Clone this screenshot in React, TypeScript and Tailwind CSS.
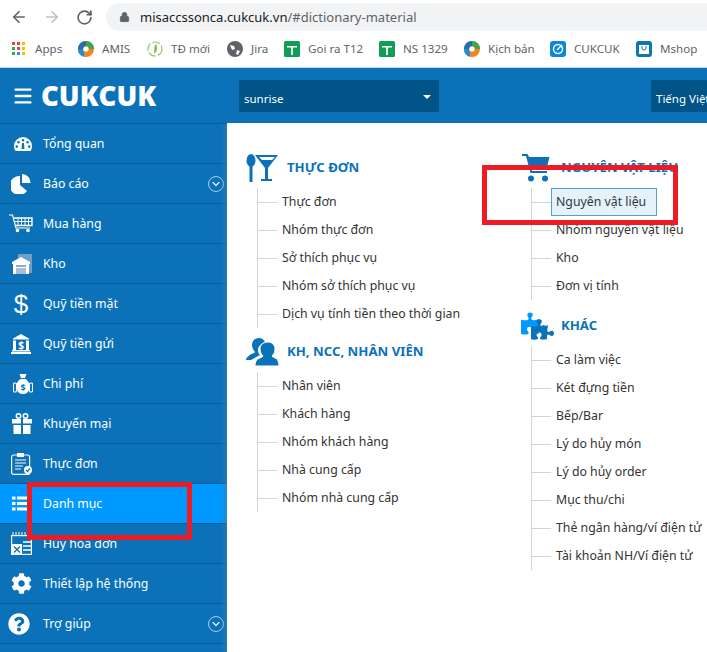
import { ArrowLeft, ArrowRight, RotateCw, Lock, Menu, ChevronDown } from "lucide-react";
import { FaCog, FaQuestionCircle, FaPuzzlePiece } from "react-icons/fa";
import type { ReactNode } from "react";

const font = "font-['Noto_Sans','Liberation_Sans',sans-serif]";

function Swirl() {
  return (
    <svg viewBox="0 0 16 16" className="w-4 h-4">
      <circle cx="8" cy="8" r="8" fill="#f58220" />
      <path d="M8 0a8 8 0 0 0-8 8h5a3 3 0 0 1 3-3z" fill="#1f6fb5" />
      <path d="M8 0a8 8 0 0 1 8 8h-5a3 3 0 0 0-3-3z" fill="#3aa655" />
      <path d="M0 8a8 8 0 0 0 6 7.7V11A3 3 0 0 1 5 8z" fill="#1c8fd6" />
      <circle cx="8" cy="8" r="2.6" fill="#fff" />
    </svg>
  );
}

function GreenCross() {
  return (
    <svg viewBox="0 0 16 16" className="w-4 h-4">
      <rect width="16" height="16" rx="1.5" fill="#0f9d58" />
      <path d="M3 5h10v1.6H8.9V14H7.1V6.6H3z" fill="#fff" />
    </svg>
  );
}

function Bookmark({ icon, label, className }: { icon: ReactNode; label: string; className: string }) {
  return (
    <div className={`flex items-center shrink-0 ${className}`}>
      {icon}
      <span className="ml-2 text-[11.6px] text-[#5f6368] whitespace-nowrap">{label}</span>
    </div>
  );
}

function AppsGrid() {
  const colors = ["#ea4335", "#ea4335", "#fbbc04", "#34a853", "#ea4335", "#fbbc04", "#34a853", "#4285f4", "#fbbc04"];
  return (
    <div className="grid grid-cols-3 gap-[2px] w-[13px]">
      {colors.map((c, i) => (
        <span key={i} className="w-[3px] h-[3px]" style={{ background: c }} />
      ))}
    </div>
  );
}

function Gauge() {
  return (
    <svg viewBox="0 0 18 14" className="w-[18px] h-[14px] ml-[6px] mt-[1px]">
      <path
        fillRule="evenodd"
        fill="#fff"
        d="M9 0a9 9 0 0 1 9 9c0 2-.5 3.500-1.500 5H1.500C.5 12.500 0 11 0 9a9 9 0 0 1 9-9zM9 2a1.300 1.300 0 1 0 0 2.600A1.300 1.300 0 0 0 9 2zM4.500 4a1.300 1.300 0 1 0 0 2.600 1.300 1.300 0 0 0 0-2.600zM13.500 4a1.300 1.300 0 1 0 0 2.600 1.300 1.300 0 0 0 0-2.600zM2.800 8.300a1.300 1.300 0 1 0 0 2.600 1.300 1.300 0 0 0 0-2.600zM15.200 8.300a1.300 1.300 0 1 0 0 2.600 1.300 1.300 0 0 0 0-2.600zM8 6l-.5 6h3L10 6z"
      />
    </svg>
  );
}

function Pie() {
  return (
    <svg viewBox="0 0 20 20" className="w-[20px] h-[20px] ml-[1px]">
      <path d="M9 2v9l7 6a9.500 9.500 0 1 1-7-15z" fill="#fff" />
      <path d="M11 0a8.500 8.500 0 0 1 8.500 9H11z" fill="#fff" />
    </svg>
  );
}

function CartOutline() {
  return (
    <svg viewBox="0 0 24 19" className="w-[24px] h-[19px] ml-[1px]" fill="none" stroke="#fff">
      <path d="M0 1h3.500l3.500 13h14" strokeWidth="1.200" />
      <path d="M5 4h18v7.500H7" strokeWidth="1.400" />
      <path d="M9 4v7.500M12.500 4v7.500M16 4v7.500M19.500 4v7.500M6 7.500h17" strokeWidth="1" />
      <circle cx="8.500" cy="16.500" r="1.800" fill="#fff" stroke="none" />
      <circle cx="19" cy="16.500" r="1.800" fill="#fff" stroke="none" />
    </svg>
  );
}

function Warehouse() {
  return (
    <svg viewBox="0 0 20 20" className="w-[20px] h-[20px] ml-[3px]">
      <path d="M6 0h14v19H6z" fill="#6f9fc9" />
      <path d="M0 8l9-5 9 5v2H0z" fill="#fff" />
      <path d="M1 10h16v10H1z" fill="#fff" />
      <path d="M4 11h10v2H4z" fill="#8aa9c2" />
      <path d="M4 14h10v6H4z" fill="#a8bfd2" />
    </svg>
  );
}

function Bank() {
  return (
    <svg viewBox="0 0 20 20" className="w-[20px] h-[20px] ml-[1px]" fill="#fff">
      <path d="M10 0l8 4.500v1H2v-1z" />
      <rect x="2" y="6.500" width="3" height="9.500" />
      <rect x="15" y="6.500" width="3" height="9.500" />
      <rect x="1" y="16" width="18" height="1.500" />
      <rect x="0" y="18" width="20" height="2" />
      <text x="10" y="14.500" fontSize="10" fontWeight="700" textAnchor="middle" fill="#fff">$</text>
    </svg>
  );
}

function MoneyBag() {
  return (
    <svg viewBox="0 0 20 20" className="w-[20px] h-[20px] ml-[6px]">
      <path d="M6.500 0h7l-1.500 4h-4z" fill="#fff" />
      <path d="M7.500 5h5c3 2 5 6 4 10-1 3-3 5-6.500 5s-5.500-2-6.500-5c-1-4 1-8 4-10z" fill="#fff" />
      <rect x="0.500" y="9" width="3" height="9" rx="1" fill="none" stroke="#fff" strokeWidth="1.100" />
      <rect x="16.500" y="9" width="3" height="9" rx="1" fill="none" stroke="#fff" strokeWidth="1.100" />
      <text x="10" y="17" fontSize="9" fontWeight="700" textAnchor="middle" fill="#0b72b9">$</text>
    </svg>
  );
}

function Gift() {
  return (
    <svg viewBox="0 0 20 21" className="w-[20px] h-[21px] ml-[4px]" fill="#fff">
      <circle cx="6.500" cy="3" r="2.200" fill="none" stroke="#fff" strokeWidth="1.500" />
      <circle cx="13.500" cy="3" r="2.200" fill="none" stroke="#fff" strokeWidth="1.500" />
      <rect x="0" y="6" width="9" height="4.500" />
      <rect x="11" y="6" width="9" height="4.500" />
      <rect x="1.500" y="12" width="7.500" height="9" />
      <rect x="11" y="12" width="7.500" height="9" />
    </svg>
  );
}

function Clipboard() {
  return (
    <svg viewBox="0 0 21 23" className="w-[21px] h-[23px] ml-[3px]">
      <rect x="0.600" y="3" width="18" height="19.400" rx="2" fill="none" stroke="#fff" strokeWidth="1.200" />
      <rect x="6" y="1" width="7" height="4" fill="#fff" />
      <path d="M4 8h11M4 11h11M4 14h8M4 17h6" stroke="#a9cbe4" strokeWidth="1.300" />
      <circle cx="17" cy="18" r="4" fill="#fff" />
      <path d="M15 18l1.500 1.500 2.500-3" stroke="#0b72b9" strokeWidth="1.200" fill="none" />
    </svg>
  );
}

function ListIcon() {
  return (
    <svg viewBox="0 0 16 15" className="w-[16px] h-[15px]" fill="#fff">
      <rect x="0" y="0.500" width="3.500" height="3" />
      <rect x="5" y="0.500" width="11" height="3" />
      <rect x="0" y="6" width="3.500" height="3" />
      <rect x="5" y="6" width="11" height="3" />
      <rect x="0" y="11.500" width="3.500" height="3" />
      <rect x="5" y="11.500" width="11" height="3" />
    </svg>
  );
}

function CancelBill() {
  return (
    <svg viewBox="0 0 21 23" className="w-[21px] h-[23px] ml-[3px]">
      <path d="M2 0v4M5 0v4M8 0v4M11 0v4M14 0v4M17 0v4" stroke="#fff" strokeWidth="1" />
      <rect x="0.600" y="3.600" width="19.800" height="18.800" fill="none" stroke="#fff" strokeWidth="1.200" />
      <path d="M12 10h8M12 14h8M12 18h8" stroke="#fff" strokeWidth="1.400" />
      <rect x="1" y="12" width="10" height="10" fill="#fff" />
      <path d="M3 14.500l6 6M9 14.500l-6 6" stroke="#0b72b9" strokeWidth="1.400" />
    </svg>
  );
}

function CircleDown() {
  return (
    <span className="w-[16px] h-[16px] rounded-full border-[1.5px] border-[#a9cde6] flex items-center justify-center">
      <ChevronDown className="w-[12px] h-[12px] text-[#cfe3f2]" strokeWidth={3} />
    </span>
  );
}

const menu: { label: string; icon: ReactNode; arrow?: boolean; active?: boolean }[] = [
  { label: "Tổng quan", icon: <Gauge /> },
  { label: "Báo cáo", icon: <Pie />, arrow: true },
  { label: "Mua hàng", icon: <CartOutline /> },
  { label: "Kho", icon: <Warehouse /> },
  { label: "Quỹ tiền mặt", icon: <span className="ml-[2px] text-[26px] leading-none text-white font-['Liberation_Sans',sans-serif]">$</span> },
  { label: "Quỹ tiền gửi", icon: <Bank /> },
  { label: "Chi phí", icon: <MoneyBag /> },
  { label: "Khuyến mại", icon: <Gift /> },
  { label: "Thực đơn", icon: <Clipboard /> },
  { label: "Danh mục", icon: <ListIcon />, active: true },
  { label: "Hủy hóa đơn", icon: <CancelBill /> },
  { label: "Thiết lập hệ thống", icon: <FaCog className="w-[21px] h-[21px] ml-[3px] text-white" /> },
  { label: "Trợ giúp", icon: <FaQuestionCircle className="w-[22px] h-[22px] mr-[2px] text-white" />, arrow: true },
];

function SideItem({ label, icon, arrow, active }: { label: string; icon: ReactNode; arrow?: boolean; active?: boolean }) {
  return (
    <div className={`h-[40px] flex items-center border-b border-[#075a92] shrink-0 ${active ? "bg-[#0099ff]" : ""}`}>
      <div className="w-[38px] ml-[1px] flex justify-center shrink-0">{icon}</div>
      <span className="ml-[4px] pt-[2px] text-[12.3px] text-white flex-1 whitespace-nowrap">{label}</span>
      {arrow && <span className="mr-[3px]"><CircleDown /></span>}
    </div>
  );
}

function Group({ icon, title, items, selected, indent }: { icon: ReactNode; title: string; items: string[]; selected?: string; indent: string }) {
  return (
    <div>
      <div className="flex items-center h-[30px]">
        <div className={`shrink-0 flex items-center ${indent}`}>{icon}</div>
        <span className="text-[13.2px] font-bold text-[#0b72b9] whitespace-nowrap">{title}</span>
      </div>
      <div className="ml-[11px] mt-[5px] border-l border-[#d4d4d4] w-fit">
        {items.map((it) => (
          <div key={it} className="h-[28px] flex items-center">
            <span className="w-[19px] h-px bg-[#d4d4d4] shrink-0" />
            {it === selected ? (
              <span className="h-[28px] w-[106px] flex items-center pl-[4px] border border-[#4fa3d1] bg-[#e6f2f9] text-[12.3px] text-[#2d3a45] whitespace-nowrap">{it}</span>
            ) : (
              <span className="ml-[5px] text-[12.3px] text-[#333] whitespace-nowrap">{it}</span>
            )}
          </div>
        ))}
      </div>
    </div>
  );
}

export default function App() {
  return (
    <div className={`w-[707px] h-[652px] overflow-hidden relative bg-white flex flex-col ${font}`}>
      {/* thanh trinh duyet */}
      <div className="h-[34px] flex items-center shrink-0">
        <ArrowLeft className="w-[18px] h-[18px] ml-[10px] text-[#5f6368]" strokeWidth={2.2} />
        <ArrowRight className="w-[18px] h-[18px] ml-[15px] text-[#bdc1c6]" strokeWidth={2.2} />
        <RotateCw className="w-[17px] h-[17px] ml-[15px] text-[#5f6368]" strokeWidth={2.4} />
        <div className="ml-[13px] flex-1 h-[28px] bg-[#f1f3f4] rounded-l-full flex items-center">
          <Lock className="w-[11px] h-[12px] ml-[13px] text-[#5f6368]" fill="#5f6368" />
          <span className="ml-[10px] pt-[1px] text-[13px] text-[#202124] whitespace-nowrap">
            misaccssonca.cukcuk.vn<span className="text-[#5f6368]">/#dictionary-material</span>
          </span>
        </div>
      </div>
      <div className="h-[33px] flex items-center shrink-0 pl-[12px] pb-[3px]">
        <div className="flex items-center shrink-0 w-[66px]">
          <AppsGrid />
          <span className="ml-[10px] text-[11.6px] text-[#5f6368]">Apps</span>
        </div>
        <Bookmark className="w-[69px]" icon={<Swirl />} label="AMIS" />
        <Bookmark className="w-[80px]" icon={<svg viewBox="0 0 16 16" className="w-4 h-4"><circle cx="8" cy="8" r="7" fill="none" stroke="#9cc46a" strokeWidth="1.2" strokeDasharray="8 2" /><path d="M9 3c-3 3-1 6-2 10 3-2 4-6 2-10z" fill="#8db652" /></svg>} label="TĐ mới" />
        <Bookmark className="w-[57px]" icon={<svg viewBox="0 0 16 16" className="w-4 h-4"><circle cx="8" cy="8" r="8" fill="#5f6368" /><path d="M3 4l4 1 1 3-3 1zM10 9l3 1-2 4-2-1z" fill="#fff" /></svg>} label="Jira" />
        <Bookmark className="w-[95px]" icon={<GreenCross />} label="Goi ra T12" />
        <Bookmark className="w-[85px]" icon={<GreenCross />} label="NS 1329" />
        <Bookmark className="w-[86px]" icon={<Swirl />} label="Kịch bản" />
        <Bookmark className="w-[86px]" icon={<svg viewBox="0 0 16 16" className="w-4 h-4"><rect width="16" height="16" rx="3" fill="#0d87d8" /><circle cx="8" cy="8" r="4.5" fill="none" stroke="#fff" strokeWidth="1.4" /><path d="M7 9l5-5" stroke="#fff" strokeWidth="1.4" /></svg>} label="CUKCUK" />
        <Bookmark className="w-[66px]" icon={<svg viewBox="0 0 16 16" className="w-4 h-4"><rect width="16" height="16" rx="3" fill="#0f76b5" /><path d="M3 4h10v9H3z" fill="#fff" /><path d="M6 5v2a2 2 0 0 0 4 0V5" stroke="#0f76b5" fill="none" /></svg>} label="Mshop" />
      </div>

      {/* header */}
      <div className="h-[56px] bg-[#0b72b9] border-t border-[#c6d9e6] pt-[1px] flex items-center shrink-0">
        <Menu className="w-[22px] h-[22px] ml-[12px] text-white" strokeWidth={2.6} />
        <span className="ml-[7px] w-[198px] text-[27.5px] leading-none font-black text-white font-['Open_Sans',sans-serif]">CUKCUK</span>
        <div className="w-[200px] h-[32px] bg-[#005487] flex items-center justify-between text-[11.5px] text-white pl-[5px] pr-[8px]">
          <span className="pt-[6px]">sunrise</span>
          <span className="mt-[1px] w-0 h-0 border-x-[4px] border-x-transparent border-t-[4px] border-t-white" />
        </div>
        <div className="ml-auto w-[56px] h-[32px] bg-[#005487] flex items-center text-[11.5px] text-white pl-[5px] pt-[6px] overflow-hidden whitespace-nowrap">
          Tiếng Việt
        </div>
      </div>

      <div className="flex-1 flex min-h-0">
        {/* menu trai */}
        <div className="w-[227px] shrink-0 bg-[#0b72b9] border-t border-[#075a92] relative">
          {menu.map((m) => (
            <SideItem key={m.label} {...m} />
          ))}
          <div className="absolute inset-y-0 right-0 w-[6px] bg-gradient-to-r from-transparent to-[#3f7ea8]/60" />
        </div>

        {/* noi dung */}
        <div className="flex-1 flex pl-[19px] pt-[30px] min-w-0 overflow-hidden">
          <div className="w-[274px] shrink-0 flex flex-col gap-[9px]">
            <Group
              indent="w-[41px]"
              icon={
                <svg viewBox="0 0 33 28" className="w-[33px] h-[28px]" fill="#0b72b9">
                  <ellipse cx="5" cy="6.500" rx="4.500" ry="6.500" />
                  <rect x="3.500" y="10" width="3" height="18" />
                  <path d="M9 1h23L22 14v11h4v2H15v-2h4V14zM13 3l3 3h10l3-3z" fillRule="evenodd" />
                </svg>
              }
              title="THỰC ĐƠN"
              items={["Thực đơn", "Nhóm thực đơn", "Sở thích phục vụ", "Nhóm sở thích phục vụ", "Dịch vụ tính tiền theo thời gian"]}
            />
            <Group
              indent="w-[41px]"
              icon={
                <svg viewBox="0 0 33 28" className="w-[33px] h-[28px]" fill="#0b72b9">
                  <path d="M3 18c0-2 5-2 6-4-2-2-3-5-3-7 0-4 3-7 7-7 3 0 5 2 6 4-3 1-7 4-7 8 0 3 1 4 2 5L5 22H0c0-2 1-3 3-4z" />
                  <path d="M22 4c4 0 7 3 7 7 0 3-1 5-3 7 1 2 6 2 6 5 .5 1 1 3 1 5H9c0-2 .5-4 1-5 1-3 6-3 7-5-2-2-3-4-3-7 0-4 3-7 8-7z" stroke="#fff" strokeWidth="1" />
                </svg>
              }
              title="KH, NCC, NHÂN VIÊN"
              items={["Nhân viên", "Khách hàng", "Nhóm khách hàng", "Nhà cung cấp", "Nhóm nhà cung cấp"]}
            />
          </div>
          <div className="shrink-0 flex flex-col gap-[11px]">
            <Group
              indent="w-[41px] pl-[2px]"
              icon={
                <svg viewBox="0 0 28 28" className="w-[28px] h-[28px]" fill="#0b72b9">
                  <path d="M0 0h5.500l1.500 3h20.500l-3 12H9.500l.5 2h15v2H8.500L4 2H0z" />
                  <circle cx="9" cy="24.500" r="3" />
                  <circle cx="23" cy="24.500" r="3" />
                </svg>
              }
              title="NGUYÊN VẬT LIỆU"
              selected="Nguyên vật liệu"
              items={["Nguyên vật liệu", "Nhóm nguyên vật liệu", "Kho", "Đơn vị tính"]}
            />
            <Group
              indent="w-[41px] pl-[1px]"
              icon={
                <span className="relative w-[33px] h-[30px] block">
                  <FaPuzzlePiece className="absolute left-0 top-0 w-[25px] h-[25px] text-[#0099ff]" />
                  <FaPuzzlePiece className="absolute right-0 bottom-0 w-[23px] h-[23px] text-[#0b72b9]" />
                </span>
              }
              title="KHÁC"
              items={["Ca làm việc", "Két đựng tiền", "Bếp/Bar", "Lý do hủy món", "Lý do hủy order", "Mục thu/chi", "Thẻ ngân hàng/ví điện tử", "Tài khoản NH/Ví điện tử"]}
            />
          </div>
        </div>
      </div>

      {/* khung do */}
      <div className="absolute left-[27px] top-[482px] w-[165px] h-[58px] border-[5px] border-[#ed1c24]" />
      <div className="absolute left-[482px] top-[165px] w-[196px] h-[60px] border-[5px] border-[#ed1c24]" />
    </div>
  );
}
